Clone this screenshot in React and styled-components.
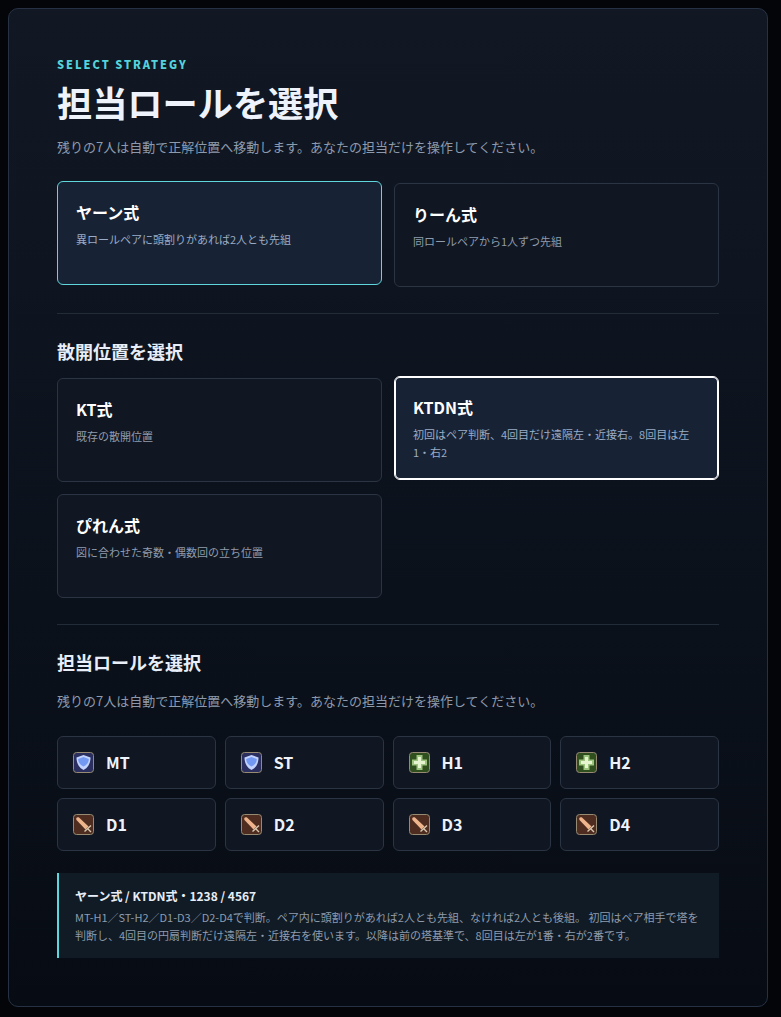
import styled, { createGlobalStyle } from "styled-components";

const GlobalStyle = createGlobalStyle`
  * {
    box-sizing: border-box;
  }
  body {
    margin: 0;
    background: #030509;
    font-family: "Noto Sans CJK JP", "Noto Sans", sans-serif;
  }
`;

const Page = styled.div`
  padding: 8px 13px 10px 8px;
`;
const Panel = styled.div`
  height: 999px;
  padding: 48px 48px 0;
  border: 1px solid #263244;
  border-radius: 10px;
  background: linear-gradient(180deg, #111824 0%, #0b111b 60%, #070c14 100%);
`;
const Eyebrow = styled.div`
  height: 14px;
  font-size: 11px;
  line-height: 14px;
  font-weight: 800;
  letter-spacing: 2px;
  color: #54d3dc;
`;
const Title = styled.h1`
  margin: 8px 0 0;
  font-size: 35.2px;
  line-height: 46px;
  font-weight: 700;
  color: #eef3fb;
`;
const Lead = styled.p`
  margin: ${(p) => p.$top}px 0 0;
  font-size: 13px;
  line-height: 20px;
  color: #8d9aac;
`;
const CardGrid = styled.div`
  display: grid;
  grid-template-columns: 1fr 1fr;
  gap: 12px;
  margin-top: ${(p) => p.$top}px;
`;
const Card = styled.div`
  height: 104px;
  padding: 18px;
  border: 1px solid ${(p) => (p.$on === "white" ? "#ffffff" : p.$on === "cyan" ? "#5fd6dc" : "#2b3443")};
  border-radius: 6px;
  background: ${(p) => (p.$on ? "#172335" : "#101722")};
  box-shadow: ${(p) => (p.$on === "white" ? "inset 0 0 0 1px #ffffff" : "none")};
  transform: ${(p) => (p.$on ? "translateY(-2px)" : "none")};
`;
const CardTitle = styled.div`
  font-size: 16px;
  line-height: 24px;
  font-weight: 700;
  color: #ffffff;
`;
const CardText = styled.div`
  margin-top: 7px;
  font-size: 11px;
  line-height: 17.6px;
  color: ${(p) => (p.$on ? "#9aacc5" : "#8f9bad")};
`;
const Divider = styled.hr`
  margin: 26px 0 0;
  border: 0;
  border-top: 1px solid #222b38;
`;
const Heading = styled.h2`
  margin: 24px 0 0;
  font-size: 18px;
  line-height: 26px;
  font-weight: 700;
  color: #e8eef7;
`;
const RoleGrid = styled.div`
  display: grid;
  grid-template-columns: repeat(4, 1fr);
  gap: 9px;
  margin-top: 25px;
`;
const RoleButton = styled.div`
  display: flex;
  align-items: center;
  gap: 12px;
  height: 53px;
  padding-left: 15px;
  border: 1px solid #2b3443;
  border-radius: 6px;
  background: #101722;
`;
const RoleName = styled.span`
  margin-bottom: 2px;
  font-size: 16px;
  font-weight: 700;
  color: #eef3fb;
`;
const Note = styled.div`
  margin-top: 22px;
  height: 85px;
  padding: 14px 16px;
  border-left: 2px solid #5fd6dc;
  background: #101b25;
`;
const NoteTitle = styled.div`
  font-size: 12px;
  line-height: 18px;
  font-weight: 700;
  color: #e8eef7;
`;
const NoteText = styled.div`
  margin-top: 3px;
  font-size: 11px;
  line-height: 18px;
  color: #8f9bad;
`;

function JobIcon({ kind }) {
  const fills = { tank: "#2a2f60", heal: "#2f4f1e", dps: "#4f2c20" };
  return (
    <svg width="21" height="21" viewBox="0 0 21 21">
      <defs>
        <filter id="soft" x="-10%" y="-10%" width="120%" height="120%">
          <feGaussianBlur stdDeviation="0.45" />
        </filter>
      </defs>
      <rect x="0.5" y="0.5" width="20" height="20" rx="3" fill={fills[kind]} stroke="#978a72" />
      <g filter="url(#soft)">
        {kind === "tank" && (
          <>
            <path d="M10.5 3 L17.5 5.5 C17.5 11 15.5 15.5 10.5 18 C5.5 15.5 3.5 11 3.5 5.5 Z" fill="#c2d3ff" />
            <path d="M10.5 5 L15.8 7 C15.8 10.5 14 12.5 10.5 14.5 C7 12.5 5.2 10.5 5.2 7 Z" fill="#7398f2" />
          </>
        )}
        {kind === "heal" && (
          <>
            <path d="M7.5 3 H13.5 V7.5 H18 V13.5 H13.5 V18 H7.5 V13.5 H3 V7.5 H7.5 Z" fill="#9cc47e" />
            <path d="M9 5 H12 V9 H16 V12 H12 V16 H9 V12 H5 V9 H9 Z" fill="#e6f5cf" />
          </>
        )}
        {kind === "dps" && (
          <>
            <path d="M3.5 6 C2.5 4 4 2.5 6 3.5 L15.5 12.5 L12.5 15.5 Z" fill="#eeb48c" />
            <path d="M11.5 17.5 L18 11.5 M14.5 14.5 L18 18" stroke="#d8c8b0" strokeWidth="1.4" fill="none" />
          </>
        )}
      </g>
    </svg>
  );
}

const roles = [
  ["MT", "tank"],
  ["ST", "tank"],
  ["H1", "heal"],
  ["H2", "heal"],
  ["D1", "dps"],
  ["D2", "dps"],
  ["D3", "dps"],
  ["D4", "dps"],
];

export default function App() {
  return (
    <Page>
      <GlobalStyle />
      <Panel>
        <Eyebrow>SELECT STRATEGY</Eyebrow>
        <Title>担当ロールを選択</Title>
        <Lead $top={12}>残りの7人は自動で正解位置へ移動します。あなたの担当だけを操作してください。</Lead>
        <CardGrid $top={26}>
          <Card $on="cyan">
            <CardTitle>ヤーン式</CardTitle>
            <CardText $on>異ロールペアに頭割りがあれば2人とも先組</CardText>
          </Card>
          <Card>
            <CardTitle>りーん式</CardTitle>
            <CardText>同ロールペアから1人ずつ先組</CardText>
          </Card>
        </CardGrid>
        <Divider />
        <Heading>散開位置を選択</Heading>
        <CardGrid $top={14}>
          <Card>
            <CardTitle>KT式</CardTitle>
            <CardText>既存の散開位置</CardText>
          </Card>
          <Card $on="white">
            <CardTitle>KTDN式</CardTitle>
            <CardText $on>初回はペア判断、4回目だけ遠隔左・近接右。8回目は左1・右2</CardText>
          </Card>
          <Card>
            <CardTitle>ぴれん式</CardTitle>
            <CardText>図に合わせた奇数・偶数回の立ち位置</CardText>
          </Card>
        </CardGrid>
        <Divider />
        <Heading>担当ロールを選択</Heading>
        <Lead $top={16}>残りの7人は自動で正解位置へ移動します。あなたの担当だけを操作してください。</Lead>
        <RoleGrid>
          {roles.map(([name, kind]) => (
            <RoleButton key={name}>
              <JobIcon kind={kind} />
              <RoleName>{name}</RoleName>
            </RoleButton>
          ))}
        </RoleGrid>
        <Note>
          <NoteTitle>ヤーン式 / KTDN式・1238 / 4567</NoteTitle>
          <NoteText>
            MT-H1／ST-H2／D1-D3／D2-D4で判断。ペア内に頭割りがあれば2人とも先組、なければ2人とも後組。 初回はペア相手で塔を判断し、4回目の円扇判断だけ遠隔左・近接右を使います。以降は前の塔基準で、8回目は左が1番・右が2番です。
          </NoteText>
        </Note>
      </Panel>
    </Page>
  );
}
